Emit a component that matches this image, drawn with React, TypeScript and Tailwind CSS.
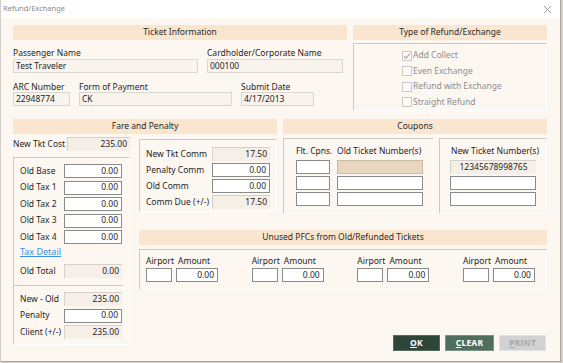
const FONT = "font-['Segoe_UI','Noto_Sans',sans-serif]";

type FieldKind = "edit" | "readonly" | "tan" | "flat";

function Field({
  value = "",
  w,
  kind = "edit",
  align = "right",
}: {
  value?: string;
  w: string;
  kind?: FieldKind;
  align?: "left" | "right" | "center";
}) {
  const look =
    kind === "edit"
      ? "bg-white border border-[#8a8a8a]"
      : kind === "tan"
        ? "bg-[#e8d6c1] border border-[#cdbba6]"
        : kind === "flat"
          ? "bg-[#f6efe8] border-l border-t border-[#d6d0ca]"
          : "bg-[#f9f3ed] border border-[#dcd6d0]";
  const a =
    align === "right"
      ? "justify-end pr-[3px]"
      : align === "center"
        ? "justify-center"
        : "justify-start pl-[2px]";
  return (
    <div
      className={`${w} ${look} ${a} h-[14px] flex items-center text-[8.5px] leading-none text-[#1e1e1e] shrink-0`}
    >
      {value}
    </div>
  );
}

function Header({ title, w }: { title: string; w: string }) {
  return (
    <div
      className={`${w} h-[15px] bg-[#fae5ce] flex items-center justify-center text-[8.5px] text-[#2a2a2a]`}
    >
      {title}
    </div>
  );
}

function Row({
  label,
  children,
}: {
  label: string;
  children: React.ReactNode;
}) {
  return (
    <div className="flex items-center justify-between h-[14px]">
      <span className="text-[8.5px] text-[#1e1e1e]">{label}</span>
      {children}
    </div>
  );
}

function Check({ label, checked }: { label: string; checked?: boolean }) {
  return (
    <div className="flex items-center h-[15.5px] gap-[1px]">
      <div className="w-[10px] h-[10px] border border-[#c9c9c9] bg-[#fbf8f5] flex items-center justify-center">
        {checked && (
          <svg width="8" height="8" viewBox="0 0 8 8">
            <path d="M1 4.2 L3 6.2 L7 1.5" fill="none" stroke="#a3a3a3" strokeWidth="1.1" />
          </svg>
        )}
      </div>
      <span className="text-[8.5px] text-[#8d8d8d]">{label}</span>
    </div>
  );
}

function PfcGroup() {
  return (
    <div className="flex flex-col w-[72px]">
      <div className="flex h-[12px] items-center gap-[4px] text-[8.5px] text-[#1e1e1e]">
        <span>Airport</span>
        <span>Amount</span>
      </div>
      <div className="flex gap-[4px] mt-[1px]">
        <Field w="w-[26px]" />
        <Field w="w-[42px]" value="0.00" />
      </div>
    </div>
  );
}

function Btn({
  first,
  rest,
  tone,
  w,
}: {
  first: string;
  rest: string;
  tone: "dark" | "mid" | "off";
  w: string;
}) {
  const look =
    tone === "dark"
      ? "bg-[#2f4537] text-white border-[#55695c]"
      : tone === "mid"
        ? "bg-[#4f6f5c] text-white border-[#7a9385]"
        : "bg-[#d2d2d2] text-[#a9a9a9] border-[#e2e2e2]";
  return (
    <div
      className={`${w} ${look} h-[16px] border flex items-center justify-center text-[8.5px] font-bold tracking-[0.2px]`}
    >
      <span className="underline underline-offset-1">{first}</span>
      {rest}
    </div>
  );
}

const groupBox = "border-l border-t border-[#cdc8c2] border-r border-b border-r-white border-b-white";

export default function App() {
  return (
    <div className={`w-[563px] h-[363px] bg-[#d3cec8] ${FONT}`}>
      <div className="ml-[1px] w-[560px] h-[362px] bg-[#fdf7f1] border-r border-b border-[#aaa49e] flex flex-col">
        {/* title bar */}
        <div className="h-[18px] bg-white flex items-center justify-between pl-[2px] pr-[8px] shrink-0">
          <span className="text-[7.5px] text-[#8a8a8a]">Refund/Exchange</span>
          <svg width="9" height="9" viewBox="0 0 9 9">
            <path d="M1 1 L8 8 M8 1 L1 8" stroke="#9a9a9a" strokeWidth="1" />
          </svg>
        </div>

        <div className="pl-[12px] pt-[7px] flex flex-col">
          {/* top row */}
          <div className="flex gap-[6px]">
            <div className="w-[334px] flex flex-col">
              <Header title="Ticket Information" w="w-[334px]" />
              <div className="flex gap-[9px] mt-[7px]">
                <div className="flex flex-col">
                  <span className="h-[12px] text-[8.5px] leading-[12px] text-[#1e1e1e]">Passenger Name</span>
                  <Field w="w-[185px]" kind="readonly" align="left" value="Test Traveler" />
                </div>
                <div className="flex flex-col">
                  <span className="h-[12px] text-[8.5px] leading-[12px] text-[#1e1e1e]">Cardholder/Corporate Name</span>
                  <Field w="w-[136px]" kind="readonly" align="left" value="000100" />
                </div>
              </div>
              <div className="flex gap-[9px] mt-[8px]">
                <div className="flex flex-col">
                  <span className="h-[11px] text-[8.5px] leading-[11px] text-[#1e1e1e]">ARC Number</span>
                  <Field w="w-[57px]" kind="readonly" align="left" value="22948774" />
                </div>
                <div className="flex flex-col">
                  <span className="h-[11px] text-[8.5px] leading-[11px] text-[#1e1e1e]">Form of Payment</span>
                  <Field w="w-[153px]" kind="readonly" align="left" value="CK" />
                </div>
                <div className="flex flex-col">
                  <span className="h-[11px] text-[8.5px] leading-[11px] text-[#1e1e1e]">Submit Date</span>
                  <Field w="w-[73px]" kind="readonly" align="left" value="4/17/2013" />
                </div>
              </div>
            </div>

            <div className="w-[194px] flex flex-col">
              <Header title="Type of Refund/Exchange" w="w-[194px]" />
              <div className={`${groupBox} mt-[3px] h-[68px] pl-[48px] pt-[4px] flex flex-col`}>
                <Check label="Add Collect" checked />
                <Check label="Even Exchange" />
                <Check label="Refund with Exchange" />
                <Check label="Straight Refund" />
              </div>
            </div>
          </div>

          {/* section headers */}
          <div className="flex gap-[6px] mt-[8px]">
            <Header title="Fare and Penalty" w="w-[264px]" />
            <Header title="Coupons" w="w-[264px]" />
          </div>

          <div className="flex gap-[9px]">
            {/* left fare column */}
            <div className="w-[117px] flex flex-col">
              <div className="mt-[3px]">
                <Row label="New Tkt Cost">
                  <Field w="w-[63px]" kind="flat" value="235.00" />
                </Row>
              </div>
              <div className={`${groupBox} mt-[6px] h-[188px] pl-[6px] pr-[7px] pt-[6px] flex flex-col`}>
                <div className="flex flex-col gap-[2.5px]">
                  <Row label="Old Base"><Field w="w-[58px]" value="0.00" /></Row>
                  <Row label="Old Tax 1"><Field w="w-[58px]" value="0.00" /></Row>
                  <Row label="Old Tax 2"><Field w="w-[58px]" value="0.00" /></Row>
                  <Row label="Old Tax 3"><Field w="w-[58px]" value="0.00" /></Row>
                  <Row label="Old Tax 4"><Field w="w-[58px]" value="0.00" /></Row>
                </div>
                <span className="mt-[2px] h-[12px] leading-[12px] text-[9px] text-[#3b8fe8] underline">Tax Detail</span>
                <div className="mt-[6px]">
                  <Row label="Old Total"><Field w="w-[58px]" kind="flat" value="0.00" /></Row>
                </div>
                <div className="-ml-[6px] -mr-[1px] mt-[7px] border-t border-[#cdc8c2]" />
                <div className="mt-[6px] flex flex-col gap-[2.5px]">
                  <Row label="New - Old"><Field w="w-[58px]" kind="flat" value="235.00" /></Row>
                  <Row label="Penalty"><Field w="w-[58px]" value="0.00" /></Row>
                  <Row label="Client (+/-)"><Field w="w-[58px]" kind="flat" value="235.00" /></Row>
                </div>
              </div>
            </div>

            {/* right area */}
            <div className="w-[408px] flex flex-col">
              <div className="flex">
                <div className={`${groupBox} w-[138px] h-[73px] mt-[5px] pl-[6px] pr-[6px] pt-[7px] flex flex-col gap-[2px]`}>
                  <Row label="New Tkt Comm"><Field w="w-[58px]" kind="flat" value="17.50" /></Row>
                  <Row label="Penalty Comm"><Field w="w-[58px]" value="0.00" /></Row>
                  <Row label="Old Comm"><Field w="w-[58px]" value="0.00" /></Row>
                  <Row label="Comm Due (+/-)"><Field w="w-[58px]" kind="flat" value="17.50" /></Row>
                </div>
                <div className={`${groupBox} w-[151px] h-[76px] mt-[4px] ml-[6px] pl-[12px] pt-[6px] flex flex-col`}>
                  <div className="flex h-[12px] items-center text-[8.5px] text-[#1e1e1e]">
                    <span className="w-[41px]">Flt. Cpns.</span>
                    <span>Old Ticket Number(s)</span>
                  </div>
                  <div className="mt-[3px] flex flex-col gap-[2px]">
                    <div className="flex gap-[7px]"><Field w="w-[34px]" /><Field w="w-[86px]" kind="tan" /></div>
                    <div className="flex gap-[7px]"><Field w="w-[34px]" /><Field w="w-[86px]" /></div>
                    <div className="flex gap-[7px]"><Field w="w-[34px]" /><Field w="w-[86px]" /></div>
                  </div>
                </div>
                <div className={`${groupBox} w-[108px] h-[76px] mt-[4px] ml-[5px] pl-[10px] pt-[6px] flex flex-col`}>
                  <span className="h-[12px] leading-[12px] pl-[1px] text-[8.5px] text-[#1e1e1e]">New Ticket Number(s)</span>
                  <div className="mt-[3px] flex flex-col gap-[2px]">
                    <Field w="w-[86px]" kind="flat" align="center" value="12345678998765" />
                    <Field w="w-[86px]" />
                    <Field w="w-[86px]" />
                  </div>
                </div>
              </div>

              <div className="mt-[16px]">
                <Header title="Unused PFCs from Old/Refunded Tickets" w="w-[408px]" />
              </div>
              <div className={`${groupBox} mt-[4px] h-[41px] pl-[6px] pr-[11px] pt-[5px] flex justify-between`}>
                <PfcGroup />
                <PfcGroup />
                <PfcGroup />
                <PfcGroup />
              </div>

              <div className="mt-[45px] flex justify-end gap-[5px] pr-[1px]">
                <Btn first="O" rest="K" tone="dark" w="w-[47px]" />
                <Btn first="C" rest="LEAR" tone="mid" w="w-[49px]" />
                <Btn first="P" rest="RINT" tone="off" w="w-[47px]" />
              </div>
            </div>
          </div>
        </div>
      </div>
    </div>
  );
}
